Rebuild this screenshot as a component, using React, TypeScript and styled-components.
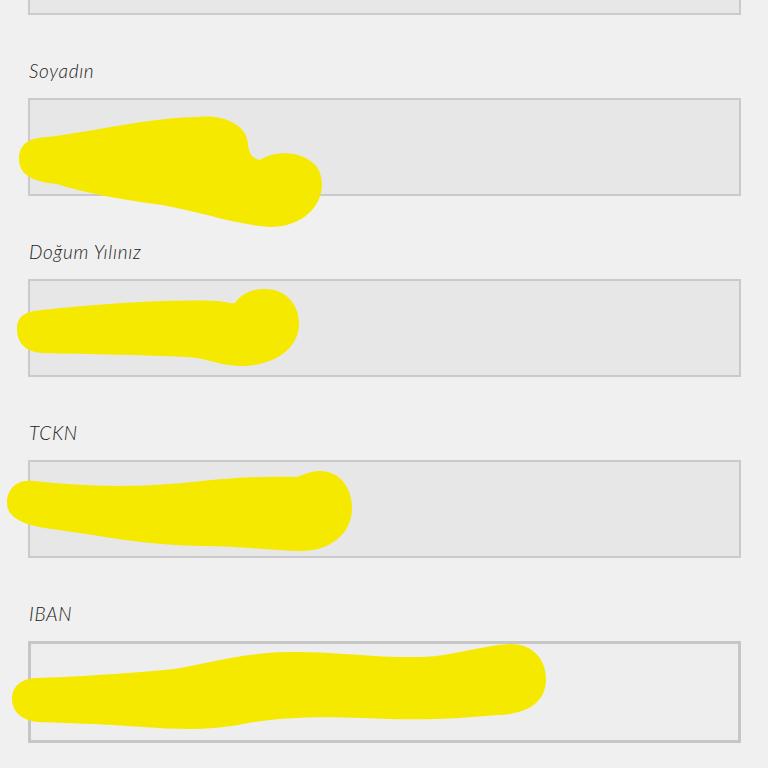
import React from 'react';
import styled, { createGlobalStyle } from 'styled-components';

const GlobalStyle = createGlobalStyle`
  html, body {
    margin: 0;
    padding: 0;
    background: #f0f0f0;
  }
  * {
    box-sizing: border-box;
  }
`;

const Page = styled.main`
  width: 768px;
  height: 768px;
  overflow: hidden;
  padding: 0 27px 0 28px;
  background: #f0f0f0;
  display: flex;
  flex-direction: column;
`;

const Field = styled.div`
  display: flex;
  flex-direction: column;
`;

const Label = styled.label`
  display: block;
  margin: 44px 0 15px 1px;
  font-family: 'Lato', 'Open Sans', sans-serif;
  font-style: italic;
  font-weight: 300;
  font-size: 19px;
  line-height: 24px;
  color: #222222;
  letter-spacing: 0.7px;
`;

const InputBox = styled.div<{ $focused?: boolean; $cut?: boolean }>`
  position: relative;
  height: ${(p) => (p.$cut ? '15px' : p.$focused ? '102px' : '98px')};
  border: ${(p) => (p.$focused ? '3px solid #c6c6c6' : '2px solid #cacaca')};
  border-top: ${(p) => (p.$cut ? 'none' : undefined)};
  background: ${(p) => (p.$focused ? '#eeeeee' : '#e7e7e7')};
`;

const Marker = styled.svg`
  position: absolute;
  left: 0;
  top: 0;
  width: 100%;
  height: 100%;
  overflow: visible;
  pointer-events: none;
  path {
    fill: #f6e900;
  }
`;

// redaction scribbles, drawn in page coordinates and shifted into each box
const scribbles = {
  soyadin:
    'M 17 157 C 17 140, 30 136, 45 135 C 90 130, 150 115, 195 115 C 220 112, 245 122, 246 142 C 247 152, 250 156, 258 158 C 272 149, 300 147, 315 165 C 330 190, 310 225, 268 225 C 230 222, 200 210, 160 203 C 110 196, 80 190, 55 182 C 30 180, 17 172, 17 157 Z',
  dogum:
    'M 15 328 C 15 312, 28 310, 40 309 C 100 303, 160 298, 215 300 C 225 301, 230 303, 233 302 C 240 292, 250 288, 263 288 C 285 288, 298 305, 297 325 C 295 350, 270 365, 238 365 C 215 364, 205 357, 185 356 C 140 354, 90 353, 40 352 C 25 351, 15 343, 15 328 Z',
  tckn:
    'M 5 502 C 5 485, 18 478, 32 480 C 80 485, 130 488, 200 480 C 240 476, 270 475, 295 476 C 305 472, 312 470, 318 470 C 338 470, 350 487, 350 507 C 350 535, 325 550, 300 550 C 270 550, 240 545, 200 545 C 150 545, 100 535, 50 528 C 25 525, 5 518, 5 502 Z',
  iban:
    'M 9 697 C 9 683, 20 676, 35 676 C 90 674, 140 670, 172 667 C 210 660, 240 651, 285 650 C 330 649, 370 656, 420 655 C 450 654, 480 643, 508 642 C 530 642, 543 658, 543 677 C 543 700, 525 712, 495 713 C 460 716, 420 719, 360 716 C 310 714, 270 716, 240 722 C 210 728, 180 728, 140 725 C 100 722, 60 721, 35 720 C 20 719, 9 710, 9 697 Z',
};

const fields = [
  { label: 'Soyadın', top: 98, path: scribbles.soyadin },
  { label: 'Doğum Yılınız', top: 280, path: scribbles.dogum },
  { label: 'TCKN', top: 461, path: scribbles.tckn },
  { label: 'IBAN', top: 642, path: scribbles.iban, focused: true },
];

const App = () => {
  return (
    <>
      <GlobalStyle />
      <Page>
        <InputBox $cut />
        {fields.map((f) => (
          <Field key={f.label}>
            <Label>{f.label}</Label>
            <InputBox $focused={f.focused}>
              <Marker>
                <g transform={`translate(-28 -${f.top})`}>
                  <path d={f.path} />
                </g>
              </Marker>
            </InputBox>
          </Field>
        ))}
      </Page>
    </>
  );
};

export default App;
